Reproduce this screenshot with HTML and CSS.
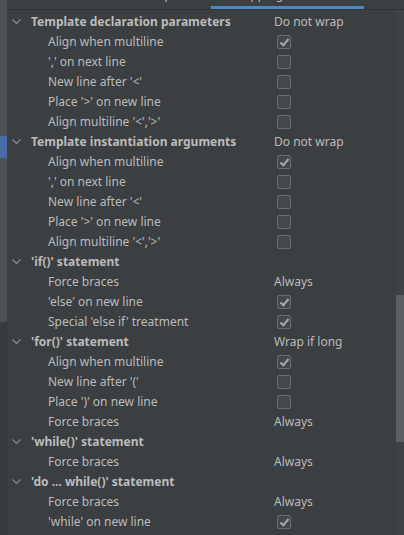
FILE: index.html
```html
<!DOCTYPE html>
<html>
<head>
<meta charset="utf-8">
<link rel="stylesheet" href="styles.css">
</head>
<body>
<div class="frame">
  <div class="strip">
    <div class="strip-top"></div>
    <div class="strip-thumb"></div>
    <div class="strip-mid"></div>
    <div class="strip-low"></div>
  </div>
  <div class="main">
    <div class="tabs">
      <span class="tab-text tab-a">Spaces</span>
      <span class="tab-text tab-b">Wrapping and Braces</span>
      <div class="tab-underline"></div>
    </div>
    <div class="body">
      <div class="list">
        <div class="row head"><span class="chev"><svg width="9" height="5" viewBox="0 0 9 5"><polyline points="0.5,0.5 4.5,4.5 8.5,0.5" fill="none" stroke="#8a8d8f" stroke-width="1.1"/></svg></span><span class="label">Template declaration parameters</span><span class="val">Do not wrap</span></div>
        <div class="row item"><span class="label">Align when multiline</span><span class="cb on"></span></div>
        <div class="row item"><span class="label">',' on next line</span><span class="cb"></span></div>
        <div class="row item"><span class="label">New line after '&lt;'</span><span class="cb"></span></div>
        <div class="row item"><span class="label">Place '&gt;' on new line</span><span class="cb"></span></div>
        <div class="row item"><span class="label">Align multiline '&lt;','&gt;'</span><span class="cb"></span></div>

        <div class="row head"><span class="chev"><svg width="9" height="5" viewBox="0 0 9 5"><polyline points="0.5,0.5 4.5,4.5 8.5,0.5" fill="none" stroke="#8a8d8f" stroke-width="1.1"/></svg></span><span class="label">Template instantiation arguments</span><span class="val">Do not wrap</span></div>
        <div class="row item"><span class="label">Align when multiline</span><span class="cb on"></span></div>
        <div class="row item"><span class="label">',' on next line</span><span class="cb"></span></div>
        <div class="row item"><span class="label">New line after '&lt;'</span><span class="cb"></span></div>
        <div class="row item"><span class="label">Place '&gt;' on new line</span><span class="cb"></span></div>
        <div class="row item"><span class="label">Align multiline '&lt;','&gt;'</span><span class="cb"></span></div>

        <div class="row head"><span class="chev"><svg width="9" height="5" viewBox="0 0 9 5"><polyline points="0.5,0.5 4.5,4.5 8.5,0.5" fill="none" stroke="#8a8d8f" stroke-width="1.1"/></svg></span><span class="label">'if()' statement</span><span class="val"></span></div>
        <div class="row item"><span class="label">Force braces</span><span class="val">Always</span></div>
        <div class="row item"><span class="label">'else' on new line</span><span class="cb on"></span></div>
        <div class="row item"><span class="label">Special 'else if' treatment</span><span class="cb on"></span></div>

        <div class="row head"><span class="chev"><svg width="9" height="5" viewBox="0 0 9 5"><polyline points="0.5,0.5 4.5,4.5 8.5,0.5" fill="none" stroke="#8a8d8f" stroke-width="1.1"/></svg></span><span class="label">'for()' statement</span><span class="val">Wrap if long</span></div>
        <div class="row item"><span class="label">Align when multiline</span><span class="cb on"></span></div>
        <div class="row item"><span class="label">New line after '('</span><span class="cb"></span></div>
        <div class="row item"><span class="label">Place ')' on new line</span><span class="cb"></span></div>
        <div class="row item"><span class="label">Force braces</span><span class="val">Always</span></div>

        <div class="row head"><span class="chev"><svg width="9" height="5" viewBox="0 0 9 5"><polyline points="0.5,0.5 4.5,4.5 8.5,0.5" fill="none" stroke="#8a8d8f" stroke-width="1.1"/></svg></span><span class="label">'while()' statement</span><span class="val"></span></div>
        <div class="row item"><span class="label">Force braces</span><span class="val">Always</span></div>

        <div class="row head"><span class="chev"><svg width="9" height="5" viewBox="0 0 9 5"><polyline points="0.5,0.5 4.5,4.5 8.5,0.5" fill="none" stroke="#8a8d8f" stroke-width="1.1"/></svg></span><span class="label">'do ... while()' statement</span><span class="val"></span></div>
        <div class="row item"><span class="label">Force braces</span><span class="val">Always</span></div>
        <div class="row item"><span class="label">'while' on new line</span><span class="cb on"></span></div>
      </div>
      <div class="vscroll">
        <div class="vs-top"></div>
        <div class="vs-thumb"></div>
        <div class="vs-bottom"></div>
      </div>
    </div>
  </div>
</div>
</body>
</html>
```

FILE: styles.css
```css
html, body {
  margin: 0;
  padding: 0;
  background: #3c3f41;
}
.frame {
  display: flex;
  width: 404px;
  height: 535px;
  overflow: hidden;
  font-family: "Noto Sans", "Open Sans", sans-serif;
  font-size: 12px;
  color: #bbbbbb;
}
.strip {
  width: 7px;
  display: flex;
  flex-direction: column;
  flex: none;
}
.strip-top {
  height: 136px;
  background: #4e5257;
}
.strip-thumb {
  height: 22px;
  background: #4a6da8;
}
.strip-mid {
  height: 164px;
  background: #4e5257;
}
.strip-low {
  flex: 1;
  background: #393c3e;
  box-shadow: inset -1px 0 0 #34373a;
}
.main {
  flex: 1;
  display: flex;
  flex-direction: column;
}
.tabs {
  height: 9px;
  border-bottom: 1px solid #323436;
  display: flex;
  align-items: flex-start;
  overflow: hidden;
  position: relative;
}
.tab-text {
  line-height: 12px;
  margin-top: -11px;
  white-space: nowrap;
  flex: none;
}
.tab-a {
  margin-left: 151px;
  width: 70px;
}
.tab-b {
  width: 120px;
}
.tab-underline {
  position: absolute;
  left: 204px;
  bottom: 0;
  width: 153px;
  height: 3px;
  background: #4a88c7;
}
.body {
  flex: 1;
  display: flex;
}
.list {
  flex: 1;
  padding-top: 1px;
}
.row {
  height: 20px;
  display: flex;
  align-items: center;
}
.chev {
  width: 9px;
  height: 5px;
  margin-left: 5px;
  margin-right: 10px;
  display: flex;
}
.chev svg {
  display: block;
}
.head .label {
  font-weight: bold;
  width: 243px;
}
.item .label {
  padding-left: 41px;
  width: 226px;
}
.label {
  white-space: nowrap;
  flex: none;
}
.val {
  white-space: nowrap;
}
.cb {
  width: 12px;
  height: 12px;
  border: 1px solid #6b6e70;
  border-radius: 2px;
  background: #43494a;
  margin-left: 3px;
  margin-top: 1px;
  box-sizing: content-box;
  position: relative;
}
.cb.on::after {
  content: "";
  position: absolute;
  left: 4px;
  top: 1px;
  width: 3px;
  height: 7px;
  border-right: 2px solid #a9abad;
  border-bottom: 2px solid #a9abad;
  transform: rotate(40deg);
}
.vscroll {
  width: 8px;
  display: flex;
  flex-direction: column;
  background: #3f4244;
  flex: none;
}
.vs-top {
  height: 285px;
}
.vs-thumb {
  height: 147px;
  background: #5c5f61;
}
.vs-bottom {
  flex: 1;
}
```
